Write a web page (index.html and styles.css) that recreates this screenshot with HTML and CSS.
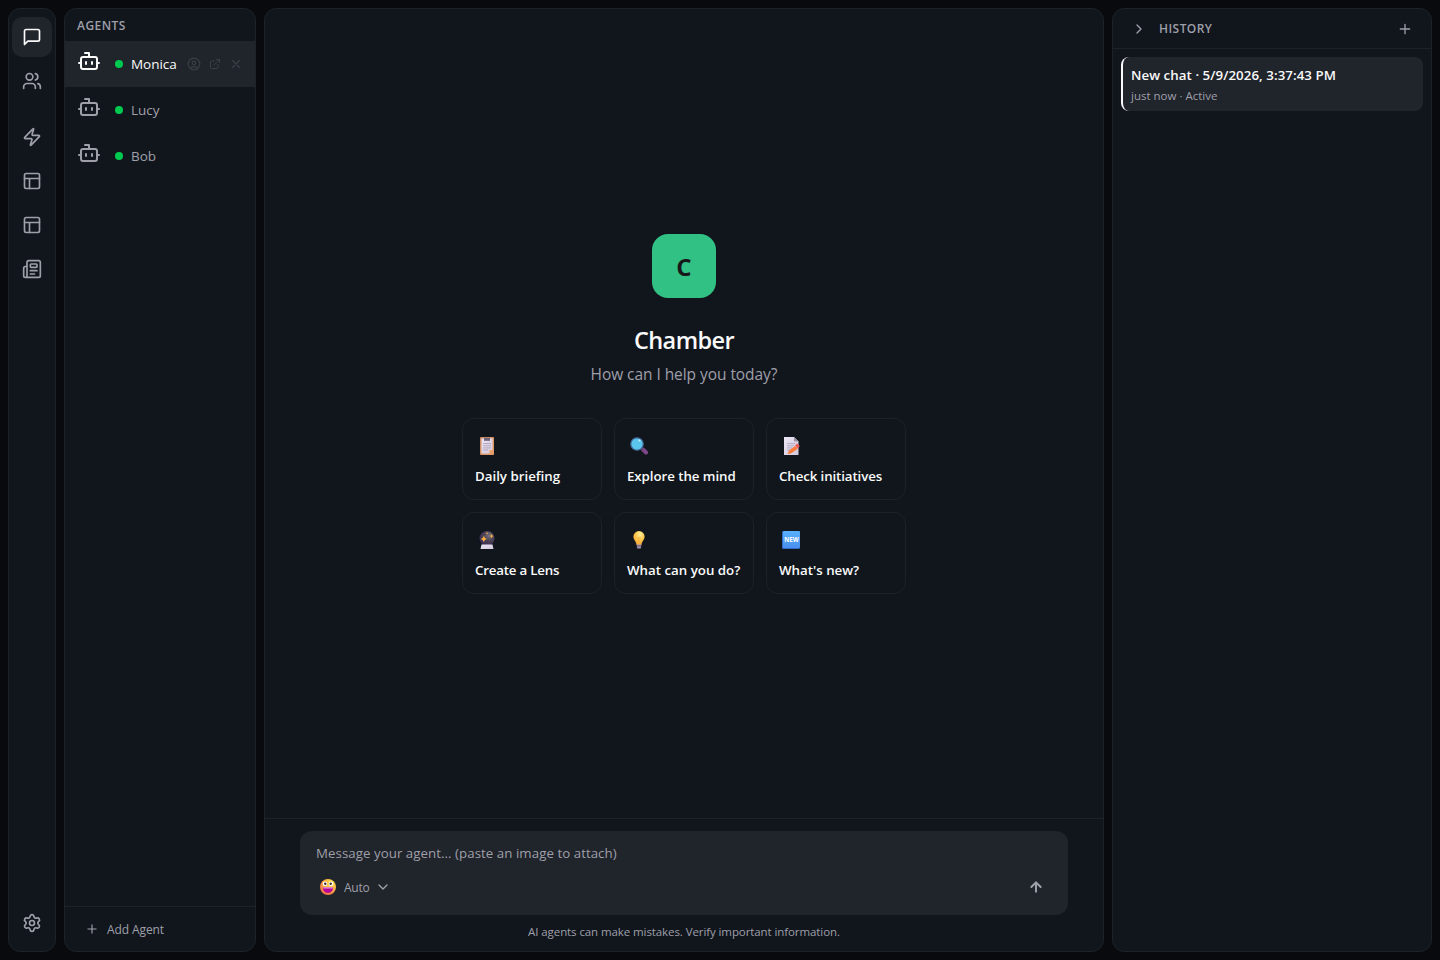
FILE: index.html
```html
<!DOCTYPE html>
<html lang="en">
<head>
<meta charset="utf-8">
<title>Chamber</title>
<link rel="stylesheet" href="styles.css">
</head>
<body>
<svg class="defs" width="0" height="0">
  <defs>
    <symbol id="bot" viewBox="0 0 24 24"><path d="M12 8V4H8"/><rect width="16" height="12" x="4" y="8" rx="2"/><path d="M2 14h2M20 14h2M15 13v2M9 13v2"/></symbol>
    <symbol id="layout" viewBox="0 0 24 24"><rect width="18" height="18" x="3" y="3" rx="2"/><path d="M3 9h18M9 21V9"/></symbol>
    <symbol id="plus" viewBox="0 0 24 24"><path d="M5 12h14M12 5v14"/></symbol>
    <linearGradient id="page" x1="0" y1="0" x2="1" y2="1"><stop offset="0" stop-color="#ece6f4"/><stop offset="1" stop-color="#d3c8de"/></linearGradient>
    <linearGradient id="board" x1="0" y1="0" x2="1" y2="1"><stop offset="0" stop-color="#c88a68"/><stop offset="1" stop-color="#e89b66"/></linearGradient>
    <radialGradient id="ball" cx=".65" cy=".3" r=".75"><stop offset="0" stop-color="#77727c"/><stop offset=".5" stop-color="#4a4054"/><stop offset="1" stop-color="#3c2b55"/></radialGradient>
    <radialGradient id="bulb" cx=".6" cy=".25" r=".8"><stop offset="0" stop-color="#ffee9a"/><stop offset=".5" stop-color="#fdc84b"/><stop offset="1" stop-color="#f5a238"/></radialGradient>
    <linearGradient id="badge" x1="0" y1="0" x2="0" y2="1"><stop offset="0" stop-color="#58b0fb"/><stop offset="1" stop-color="#4a90f0"/></linearGradient>
    <radialGradient id="face" cx=".7" cy=".25" r=".85"><stop offset="0" stop-color="#ffe54d"/><stop offset=".5" stop-color="#fdb343"/><stop offset="1" stop-color="#f0664b"/></radialGradient>
  </defs>
</svg>
<div class="app">
  <nav class="panel rail">
    <a class="rail-item active"><svg class="icon s20" viewBox="0 0 24 24"><path d="M21 15a2 2 0 0 1-2 2H7l-4 4V5a2 2 0 0 1 2-2h14a2 2 0 0 1 2 2z"/></svg></a>
    <a class="rail-item"><svg class="icon s20" viewBox="0 0 24 24"><path d="M16 21v-2a4 4 0 0 0-4-4H6a4 4 0 0 0-4 4v2"/><circle cx="9" cy="7" r="4"/><path d="M22 21v-2a4 4 0 0 0-3-3.870M16 3.130a4 4 0 0 1 0 7.750"/></svg></a>
    <a class="rail-item group"><svg class="icon s20" viewBox="0 0 24 24"><path d="M4 14a1 1 0 0 1-.78-1.63l9.9-10.2a.5.5 0 0 1 .86.46l-1.92 6.02A1 1 0 0 0 13 10h7a1 1 0 0 1 .78 1.63l-9.9 10.2a.5.5 0 0 1-.86-.46l1.92-6.02A1 1 0 0 0 11 14z"/></svg></a>
    <a class="rail-item"><svg class="icon s20"><use href="#layout"/></svg></a>
    <a class="rail-item"><svg class="icon s20"><use href="#layout"/></svg></a>
    <a class="rail-item"><svg class="icon s20" viewBox="0 0 24 24"><path d="M15 18h-5M18 14h-8"/><path d="M4 22h16a2 2 0 0 0 2-2V4a2 2 0 0 0-2-2H8a2 2 0 0 0-2 2v16a2 2 0 0 1-4 0v-9a2 2 0 0 1 2-2h2"/><rect width="8" height="4" x="10" y="6" rx="1"/></svg></a>
    <a class="rail-item bottom"><svg class="icon s20" viewBox="0 0 24 24"><path d="M9.671 4.136a2.34 2.34 0 0 1 4.659 0 2.34 2.34 0 0 0 3.319 1.915 2.34 2.34 0 0 1 2.33 4.033 2.34 2.34 0 0 0 0 3.831 2.34 2.34 0 0 1-2.33 4.033 2.34 2.34 0 0 0-3.319 1.915 2.34 2.34 0 0 1-4.659 0 2.34 2.34 0 0 0-3.32-1.915 2.34 2.34 0 0 1-2.33-4.033 2.34 2.34 0 0 0 0-3.831A2.34 2.34 0 0 1 6.35 6.051a2.34 2.34 0 0 0 3.319-1.915"/><circle cx="12" cy="12" r="3"/></svg></a>
  </nav>

  <aside class="panel agents">
    <h2 class="caption agents-title">AGENTS</h2>
    <div class="agent active">
      <svg class="icon s24"><use href="#bot"/></svg><i class="dot"></i><span class="agent-name">Monica</span>
      <span class="agent-actions">
        <svg class="icon s14" viewBox="0 0 24 24"><circle cx="12" cy="12" r="10"/><circle cx="12" cy="10" r="3"/><path d="M7 20.7V19a2 2 0 0 1 2-2h6a2 2 0 0 1 2 2v1.7"/></svg>
        <svg class="icon s12" viewBox="0 0 24 24"><path d="M15 3h6v6M10 14 21 3M18 13v6a2 2 0 0 1-2 2H5a2 2 0 0 1-2-2V8a2 2 0 0 1 2-2h6"/></svg>
        <svg class="icon s14" viewBox="0 0 24 24"><path d="M18 6 6 18M6 6l12 12"/></svg>
      </span>
    </div>
    <div class="agent"><svg class="icon s24"><use href="#bot"/></svg><i class="dot"></i><span class="agent-name">Lucy</span></div>
    <div class="agent"><svg class="icon s24"><use href="#bot"/></svg><i class="dot"></i><span class="agent-name">Bob</span></div>
    <div class="add-agent"><svg class="icon s14"><use href="#plus"/></svg><span>Add Agent</span></div>
  </aside>

  <main class="panel main">
    <section class="welcome">
      <div class="logo"><span>C</span></div>
      <h1 class="title">Chamber</h1>
      <p class="subtitle">How can I help you today?</p>
      <div class="cards">
        <div class="card">
          <svg class="emoji" viewBox="0 0 18 18"><rect x="2" y="0" width="14" height="18" rx="1" fill="url(#board)"/><path d="M3.500 1.500h11v11.500l-3 3.500h-8z" fill="url(#page)"/><path d="M14.500 13l-3 3.500V13z" fill="#f0a35a"/><path d="M6 .8h6v3H6z" fill="#6d6577"/><path d="M5 6.500h8M5 8.700h8M5 10.900h8M5 13h5" stroke="#a79cb6" stroke-width=".8"/></svg>
          <span>Daily briefing</span></div>
        <div class="card">
          <svg class="emoji" viewBox="0 0 18 18"><path d="M13 12.500l3 3" stroke="#7d4686" stroke-width="4" stroke-linecap="round"/><path d="M10 10l3 3" stroke="#5b4266" stroke-width="2"/><circle cx="7" cy="7" r="6.200" fill="#5ac5ed" stroke="#466a9a" stroke-width="1.200"/><circle cx="9.500" cy="3.600" r="1" fill="#d5f4ff"/></svg>
          <span class="t-explore">Explore the mind</span></div>
        <div class="card">
          <svg class="emoji" viewBox="0 0 18 18"><path d="M2 0h10l4.500 4.500V18H2z" fill="url(#page)"/><path d="M12 0v4.500h4.500z" fill="#9c91a8"/><path d="M5 6.500h8M5 8.700h7M5 10.900h5M5 13h3" stroke="#aaa0b8" stroke-width=".8"/><path d="M5.500 17l1.500-3.500 6-4.500 2.500 3L9 16.500z" fill="#fb7d3c"/><path d="M13 8.500l2-2 2.800 2.500-2.300 2.800z" fill="#ed5b5b"/></svg>
          <span class="t-check">Check initiatives</span></div>
        <div class="card">
          <svg class="emoji" viewBox="0 0 18 18"><circle cx="9" cy="7.500" r="7.500" fill="url(#ball)"/><path d="M3.500 13.500h11l1 4.500h-13z" fill="url(#page)"/><path d="M5.800 4.500l1 2.400 2.200 1-2.200 1-1 2.400-1-2.400-2.200-1 2.200-1zM13.500 3l.6 1.500 1.400.6-1.400.6-.6 1.500-.6-1.500-1.400-.6 1.400-.6zM9 1.300l1 1-1 1-1-1z" fill="#ffb03d"/></svg>
          <span class="t-lens">Create a Lens</span></div>
        <div class="card">
          <svg class="emoji" viewBox="0 0 18 18"><path d="M6.500 13h5l-.7 4.400H7.200z" fill="#a392aa"/><path d="M7 15h4" stroke="#665773"/><path d="M9 0a5.600 5.600 0 0 0-5.600 5.600C3.400 9 6 10 6.400 13.500h5.200C12 10 14.600 9 14.600 5.600A5.600 5.600 0 0 0 9 0z" fill="url(#bulb)"/><path d="M7.500 6.500h3M8.300 7v5M9.700 7v5" stroke="#f3ad3e" stroke-width=".6"/></svg>
          <span>What can you do?</span></div>
        <div class="card">
          <svg class="emoji" viewBox="0 0 18 18"><rect width="18" height="18" rx="1.500" fill="#326ccd"/><rect x="1" width="17" height="17" rx="1.200" fill="url(#badge)"/><text x="9.500" y="11" class="new-text">NEW</text></svg>
          <span>What's new?</span></div>
      </div>
    </section>
    <footer class="composer-area">
      <div class="composer">
        <div class="placeholder">Message your agent... (paste an image to attach)</div>
        <div class="tools">
          <div class="model">
            <svg class="face" viewBox="0 0 16 16"><circle cx="8" cy="8" r="8" fill="url(#face)"/><circle cx="5" cy="4.700" r="2.300" fill="#fff"/><circle cx="11" cy="4.700" r="2.300" fill="#fff"/><circle cx="5.300" cy="4.800" r="1.200" fill="#402a32"/><circle cx="10.700" cy="4.800" r="1.200" fill="#402a32"/><path d="M2.800 8.300h10.400c0 3.500-2 5.500-5.200 5.500s-5.200-2-5.200-5.500z" fill="#b5009a"/><path d="M3 8.300h10l-.3 1.200H3.300z" fill="#e5a0d8"/></svg>
            <span class="model-name">Auto</span>
            <svg class="icon chevron" viewBox="0 0 24 24"><path d="m6 9 6 6 6-6"/></svg>
          </div>
          <svg class="icon send" viewBox="0 0 24 24"><path d="m5 12 7-7 7 7M12 19V5"/></svg>
        </div>
      </div>
      <p class="notice">AI agents can make mistakes. Verify important information.</p>
    </footer>
  </main>

  <aside class="panel history">
    <header class="history-head">
      <svg class="icon s16" viewBox="0 0 24 24"><path d="m9 18 6-6-6-6"/></svg>
      <h2 class="caption history-title">HISTORY</h2>
      <svg class="icon s16 new-chat"><use href="#plus"/></svg>
    </header>
    <div class="chat">
      <div class="chat-title">New chat · 5/9/2026, 3:37:43 PM</div>
      <div class="chat-meta">just now · Active</div>
    </div>
  </aside>
</div>
</body>
</html>
```
FILE: styles.css
```css
* { box-sizing: border-box; }
body {
  margin: 0;
  background: #090a0d;
  color: #fafafa;
  font-family: "Open Sans", "Noto Sans", sans-serif;
  font-size: 13.3px;
}
h1, h2, p { margin: 0; }
.defs { position: absolute; }
.app { display: flex; gap: 8px; height: 960px; padding: 8px; }
.panel {
  display: flex;
  flex-direction: column;
  border: 1px solid #1d2229;
  border-radius: 12px;
  background: #11161d;
  overflow: hidden;
  white-space: nowrap;
}
.icon {
  flex: none;
  fill: none;
  stroke: currentColor;
  stroke-width: 2;
  stroke-linecap: round;
  stroke-linejoin: round;
}
.s12 { width: 12px; height: 12px; }
.s14 { width: 14px; height: 14px; }
.s16 { width: 16px; height: 16px; }
.s20 { width: 20px; height: 20px; }
.s24 { width: 24px; height: 24px; }

.rail { width: 48px; align-items: center; gap: 4px; padding: 8px 0; color: #9f9fa9; }
.rail-item {
  display: flex;
  align-items: center;
  justify-content: center;
  width: 40px;
  height: 40px;
  border-radius: 10px;
}
.rail-item.active { background: #20242b; color: #fafafa; }
.rail-item.group { margin-top: 12px; }
.rail-item.bottom { margin-top: auto; }

.caption { color: #9f9fa9; font-size: 12px; font-weight: 550; line-height: 16px; }
.agents { width: 192px; }
.agents-title { padding: 9px 12px 7px; letter-spacing: .45px; }
.agent { display: flex; align-items: center; height: 46px; padding: 0 12px; color: #9f9fa9; }
.agent .s24 { margin-bottom: 6px; }
.agent.active { background: #20242b; color: #fafafa; }
.dot { width: 8px; height: 8px; margin: 0 8px 0 14px; border-radius: 50%; background: #00c950; }
.agent-name { font-size: 13.500px; line-height: 20px; letter-spacing: -.05px; }
.agent-actions { display: flex; align-items: center; gap: 8px; margin-left: auto; color: #3a3e45; }
.add-agent {
  display: flex;
  align-items: center;
  gap: 8px;
  height: 45px;
  margin-top: auto;
  padding-left: 20px;
  border-top: 1px solid #1d2229;
  color: #9f9fa9;
  font-size: 12px;
  letter-spacing: -.1px;
}

.main { width: 840px; }
.welcome { display: flex; flex: 1; flex-direction: column; align-items: center; justify-content: center; }
.logo {
  display: flex;
  align-items: center;
  justify-content: center;
  width: 64px;
  height: 64px;
  padding-top: 2px;
  border-radius: 16px;
  background: #31c184;
  color: #18181b;
  font-size: 24px;
  font-weight: 700;
  line-height: 32px;
}
.title {
  margin-top: 24px;
  padding-top: 2px;
  font-size: 23.500px;
  font-weight: 600;
  line-height: 32px;
  height: 32px;
  letter-spacing: -.6px;
}
.subtitle { margin: 8px 0 32px; color: #9f9fa9; font-size: 15.500px; line-height: 24px; letter-spacing: -.06px; }
.cards { display: grid; grid-template-columns: repeat(3, 140px); gap: 12px; }
.card {
  display: flex;
  flex-direction: column;
  height: 82px;
  padding: 17px 0 0 12px;
  border: 1px solid #1d2229;
  border-radius: 12px;
  font-size: 13.300px;
  font-weight: 600;
  line-height: 20px;
}
.t-explore { letter-spacing: -.06px; }
.t-check { letter-spacing: -.11px; }
.t-lens { letter-spacing: -.2px; }
.emoji { width: 18px; height: 18px; margin: 1px 0 11px 3px; }
.new-text { fill: #fff; font-size: 6.200px; font-weight: 700; text-anchor: middle; }

.composer-area { height: 133px; padding: 12px 35px 0; border-top: 1px solid #1d2229; }
.composer { height: 84px; padding: 12px 16px; border-radius: 12px; background: #20242b; color: #9f9fa9; }
.placeholder { line-height: 20px; letter-spacing: .04px; }
.tools { display: flex; align-items: center; justify-content: space-between; height: 28px; margin-top: 10px; padding: 0 8px 0 4px; }
.model { display: flex; align-items: center; gap: 8px; font-size: 12px; }
.model-name { letter-spacing: -.25px; }
.face { width: 16px; height: 16px; }
.chevron { width: 16px; height: 16px; margin-left: -2px; }
.send { width: 16px; height: 16px; stroke-width: 3; }
.notice { margin-top: 9px; color: #9f9fa9; font-size: 11.500px; line-height: 16px; letter-spacing: -.09px; text-align: center; }

.history { width: 320px; }
.history-head {
  display: flex;
  align-items: center;
  height: 40px;
  padding: 0 18px;
  border-bottom: 1px solid #1d2229;
  color: #9f9fa9;
}
.history-title { padding-top: 1px; margin-left: 12px; letter-spacing: .45px; }
.new-chat { margin-left: auto; }
.chat {
  height: 54px;
  margin: 8px;
  padding: 8px;
  border-left: 2px solid #fafafa;
  border-radius: 8px;
  background: #20242b;
}
.chat-title { font-weight: 650; line-height: 20px; letter-spacing: .06px; }
.chat-meta { margin-top: 3px; color: #9f9fa9; font-size: 11.500px; line-height: 16px; }
```
